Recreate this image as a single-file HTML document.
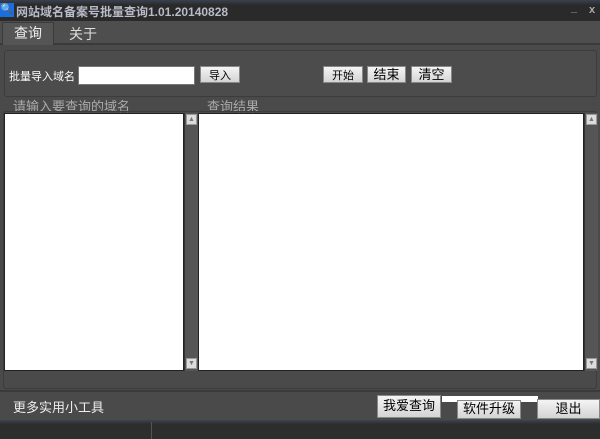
<!DOCTYPE html><html><head><style>
body{margin:0;width:600px;height:439px;overflow:hidden;background:#4a4a4a;font-family:"Liberation Sans","Noto Sans CJK SC",sans-serif;position:relative}
div{position:absolute;box-sizing:border-box}
.btn{background:linear-gradient(#f4f4f4,#d4d4d4);border:1px solid #888;color:#000;text-align:center;font-size:12px}
.w{background:#fff;border:1px solid #222}
.sb{background:#555;border-left:1px solid #333}
.ar{width:11px;height:11px;background:#ddd;border:1px solid #999;font-size:7px;color:#777;text-align:center;line-height:9px}
.t{color:#aaa;font-size:13px}
</style></head><body>
<div style="left:0;top:0;width:600px;height:21px;background:linear-gradient(#3a4250 0,#2a2a2a 5px,#2a2a2a)"></div>
<div style="left:0;top:3px;width:14px;height:14px;background:#1a6fe0;color:#fff;font-size:10px;line-height:14px;text-align:center">🔍</div>
<div style="left:16px;top:3px;color:#b8bcc8;font-size:12px;font-weight:bold;white-space:nowrap">网站域名备案号批量查询1.01.20140828</div>
<div style="left:571px;top:2px;color:#aaa;font-size:11px;font-weight:bold">_</div>
<div style="left:589px;top:4px;color:#aaa;font-size:11px;font-weight:bold">x</div>
<div style="left:0;top:21px;width:600px;height:24px;background:#4e4e4e;border-bottom:2px solid #3a3a3a"></div>
<div style="left:2px;top:22px;width:52px;height:23px;background:#555;border:1px solid #3a3a3a;border-bottom:none;color:#eee;font-size:14px;text-align:center;line-height:20px">查询</div>
<div style="left:69px;top:24px;color:#ddd;font-size:14px">关于</div>
<div style="left:4px;top:50px;width:593px;height:47px;border:1px solid #3c3c3c;border-radius:3px;background:#4c4c4c"></div>
<div style="left:9px;top:68px;color:#fff;font-size:11px">批量导入域名</div>
<div class="w" style="left:78px;top:66px;width:117px;height:19px;border-color:#777"></div>
<div class="btn" style="left:200px;top:66px;width:40px;height:17px;font-size:11px">导入</div>
<div class="btn" style="left:323px;top:66px;width:40px;height:17px;font-size:11px">开始</div>
<div class="btn" style="left:367px;top:66px;width:39px;height:17px;font-size:13px;line-height:15px">结束</div>
<div class="btn" style="left:411px;top:66px;width:41px;height:17px;font-size:13px;line-height:15px">清空</div>
<div class="t" style="left:13px;top:96px">请输入要查询的域名</div>
<div class="t" style="left:207px;top:96px">查询结果</div>
<div style="left:3px;top:111px;width:594px;height:278px;border:1px solid #3c3c3c;border-radius:3px"></div>
<div class="w" style="left:4px;top:113px;width:180px;height:258px"></div>
<div class="sb" style="left:184px;top:113px;width:14px;height:258px"><div class="ar" style="left:1px;top:1px">▲</div><div class="ar" style="left:1px;top:245px">▼</div></div>
<div class="w" style="left:198px;top:113px;width:386px;height:258px"></div>
<div class="sb" style="left:584px;top:113px;width:14px;height:258px"><div class="ar" style="left:1px;top:1px">▲</div><div class="ar" style="left:1px;top:245px">▼</div></div>
<div style="left:0;top:390px;width:600px;height:2px;background:#3a3a3a"></div>
<div style="left:13px;top:397px;color:#eee;font-size:13px">更多实用小工具</div>
<div class="btn" style="left:377px;top:395px;width:64px;height:23px;font-size:13px;line-height:20px">我爱查询</div>
<div style="left:442px;top:396px;width:96px;height:6px;background:#fff"></div>
<div class="btn" style="left:457px;top:400px;width:64px;height:19px;font-size:13px;line-height:16px">软件升级</div>
<div class="btn" style="left:537px;top:399px;width:63px;height:20px;font-size:13px;line-height:17px">退出</div>
<div style="left:0;top:420px;width:600px;height:19px;background:linear-gradient(#3d4552 0,#2d2d2d 4px,#2d2d2d)"></div>
<div style="left:151px;top:422px;width:1px;height:17px;background:#555"></div>
</body></html>
